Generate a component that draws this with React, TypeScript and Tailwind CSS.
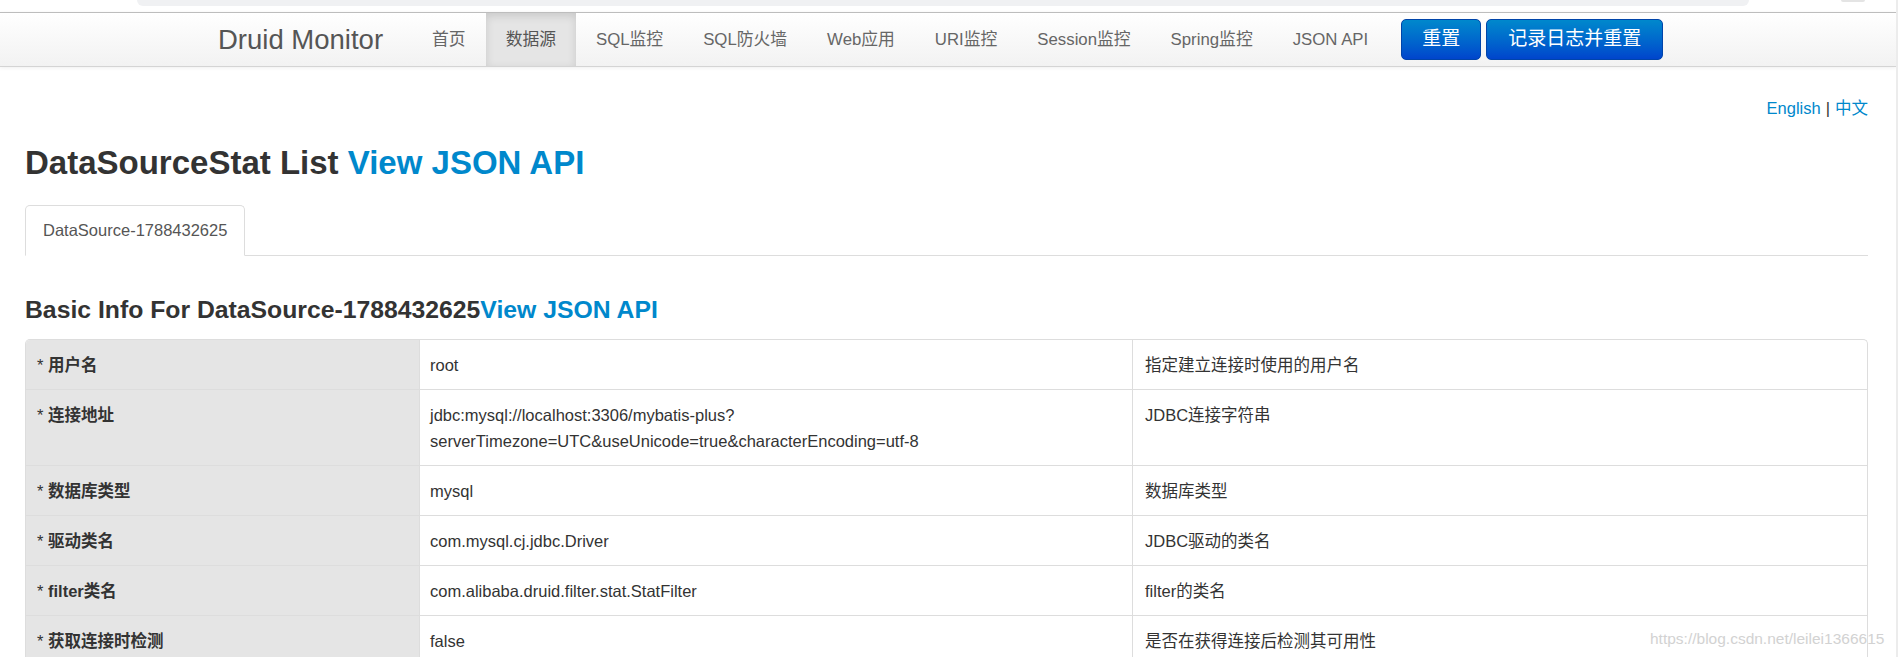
import React from "react";

const navItems = ["首页", "数据源", "SQL监控", "SQL防火墙", "Web应用", "URI监控", "Session监控", "Spring监控", "JSON API"];

type Row = { label: string; value: string[]; desc: string };

const rows: Row[] = [
  { label: "用户名", value: ["root"], desc: "指定建立连接时使用的用户名" },
  {
    label: "连接地址",
    value: ["jdbc:mysql://localhost:3306/mybatis-plus?", "serverTimezone=UTC&useUnicode=true&characterEncoding=utf-8"],
    desc: "JDBC连接字符串",
  },
  { label: "数据库类型", value: ["mysql"], desc: "数据库类型" },
  { label: "驱动类名", value: ["com.mysql.cj.jdbc.Driver"], desc: "JDBC驱动的类名" },
  { label: "filter类名", value: ["com.alibaba.druid.filter.stat.StatFilter"], desc: "filter的类名" },
  { label: "获取连接时检测", value: ["false"], desc: "是否在获得连接后检测其可用性" },
];

function NavBar() {
  return (
    <div className="h-[55px] border-t border-b border-t-[#bdbdbd] border-b-[#d4d4d4] bg-linear-to-b from-white to-[#f2f2f2] shadow-[0_1px_4px_rgba(0,0,0,0.065)]">
      <div className="flex h-full items-stretch pl-[218px]">
        <div className="flex items-center pr-[29px] text-[27.5px] text-[#555]">Druid Monitor</div>
        <div className="flex items-stretch">
          {navItems.map((n) => (
            <div
              key={n}
              className={
                n === "数据源"
                  ? "flex items-center bg-[#e5e5e5] px-[20px] text-[16.8px] text-[#555] shadow-[inset_0_3px_8px_rgba(0,0,0,0.125)]"
                  : "flex items-center px-[20px] text-[16.8px] text-[#666]"
              }
            >
              {n}
            </div>
          ))}
        </div>
        <div className="ml-[13px] flex items-center gap-[5px]">
          <button className="h-[41px] rounded-[5px] border border-[#0044aa] bg-linear-to-b from-[#0088cc] to-[#0044cc] px-[20px] text-[19px] text-white">
            重置
          </button>
          <button className="h-[41px] rounded-[5px] border border-[#0044aa] bg-linear-to-b from-[#0088cc] to-[#0044cc] px-[21px] text-[19px] text-white">
            记录日志并重置
          </button>
        </div>
      </div>
    </div>
  );
}

function InfoTable() {
  return (
    <div className="overflow-hidden rounded-t-[5px] border border-b-0 border-[#dddddd] text-[16.5px] leading-[26px] text-[#333]">
      {rows.map((r, i) => (
        <div key={r.label} className={i === 0 ? "grid grid-cols-[393px_713px_1fr]" : "grid grid-cols-[393px_713px_1fr] border-t border-[#dddddd]"}>
          <div className="bg-[#e5e5e5] pt-[12px] pb-[11px] pl-[11px]">
            <span>* </span>
            <span className="font-bold">{r.label}</span>
          </div>
          <div className="border-l border-[#dddddd] pt-[12px] pb-[11px] pl-[10px]">
            {r.value.map((v) => (
              <div key={v}>{v}</div>
            ))}
          </div>
          <div className="border-l border-[#dddddd] pt-[12px] pb-[11px] pl-[12px]">{r.desc}</div>
        </div>
      ))}
    </div>
  );
}

export default function App() {
  return (
    <div className="relative h-[657px] w-[1898px] overflow-hidden border-r-2 border-[#ececec] bg-white font-['Liberation_Sans','Noto_Sans_CJK_SC',sans-serif] text-[#333]">
      <div className="flex h-[12px] bg-white">
        <div className="ml-[137px] h-[6px] w-[1612px] rounded-b-[10px] bg-[#f0f1f3]" />
        <div className="ml-[92px] h-[2px] w-[24px] rounded-b-full bg-[#e4e4e4]" />
      </div>
      <NavBar />

      <div className="ml-[25px] w-[1843px]">
        <div className="mt-[29px] flex h-[24px] items-center justify-end text-[16.5px] leading-[24px]">
          <span className="text-[#0088cc]">English</span>
          <span className="px-[5px] text-[#333]">|</span>
          <span className="text-[#0088cc]">中文</span>
        </div>

        <div className="mt-[23px] h-[40px] text-[33px] leading-[40px] font-bold">
          DataSourceStat List <span className="text-[#0088cc]">View JSON API</span>
        </div>

        <div className="mt-[22px] flex border-b border-[#dddddd]">
          <div className="-mb-px flex h-[51px] items-center rounded-t-[5px] border border-[#dddddd] border-b-white bg-white px-[17px] text-[16.5px] text-[#555]">
            DataSource-1788432625
          </div>
        </div>

        <div className="mt-[39px] h-[30px] text-[24.75px] leading-[30px] font-bold">
          Basic Info For DataSource-1788432625<span className="text-[#0088cc]">View JSON API</span>
        </div>

        <div className="mt-[14px]">
          <InfoTable />
        </div>
      </div>

      <div className="absolute top-[627px] left-[1650px] text-[15.5px] leading-[24px] text-[#d2d2d2] [text-shadow:0_0_2px_white]">
        https://blog.csdn.net/leilei1366615
      </div>
    </div>
  );
}
